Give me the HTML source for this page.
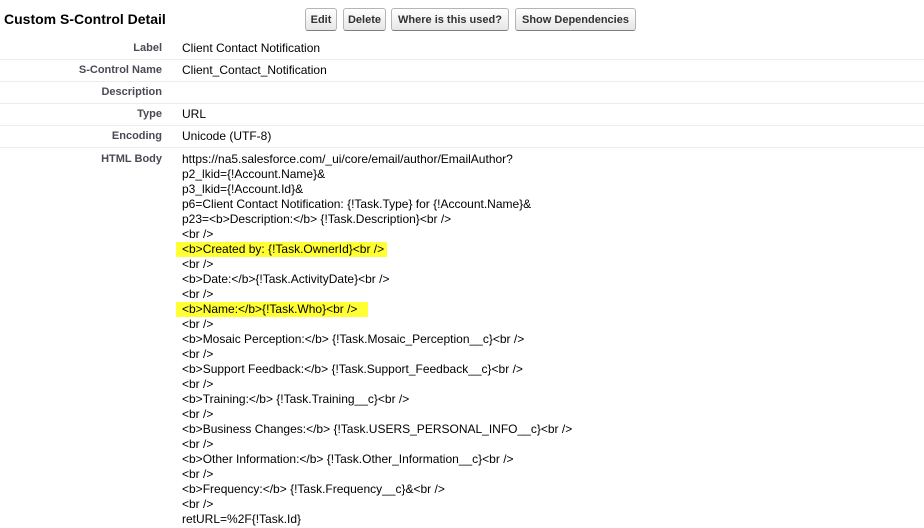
<!DOCTYPE html>
<html><head><style>
body{margin:0;width:924px;height:528px;background:#fff;font-family:"Liberation Sans",Arial,sans-serif;color:#000;overflow:hidden;position:relative}
.t{position:absolute;left:4px;top:11px;font-weight:bold;font-size:14px;color:#000}
.btn{position:absolute;top:8px;height:23px;border:1px solid #b5b5b5;border-bottom-color:#7f7f7f;border-radius:3px;background:linear-gradient(#fff,#f0f0f0 60%,#e6e6e6);font-weight:bold;font-size:11px;color:#333;line-height:23px;text-align:center;box-sizing:border-box}
.row{position:absolute;left:0;width:924px;height:22px;border-bottom:1px solid #ececec}
.l{position:absolute;right:762px;top:5px;font-weight:bold;font-size:11px;color:#4a4a56;text-align:right;white-space:nowrap}
.v{position:absolute;left:182px;top:4px;font-size:12px;color:#000;white-space:nowrap}
.body{position:absolute;left:182px;top:152px;font-size:12px;line-height:15px;color:#000;white-space:pre}
.hl{position:absolute;background:#ffff33}
</style></head><body>
<div class="t">Custom S-Control Detail</div>
<div class="btn" style="left:305px;width:32px">Edit</div>
<div class="btn" style="left:343px;width:43px">Delete</div>
<div class="btn" style="left:391px;width:118px">Where is this used?</div>
<div class="btn" style="left:515px;width:121px">Show Dependencies</div>
<div class="row" style="top:37px"><span class="l">Label</span><span class="v">Client Contact Notification</span></div>
<div class="row" style="top:59px"><span class="l">S-Control Name</span><span class="v">Client_Contact_Notification</span></div>
<div class="row" style="top:81px"><span class="l">Description</span></div>
<div class="row" style="top:103px"><span class="l">Type</span><span class="v">URL</span></div>
<div class="row" style="top:125px"><span class="l">Encoding</span><span class="v">Unicode (UTF-8)</span></div>
<div style="position:absolute;top:147px;left:0;width:924px;height:1px;background:#ececec"></div>
<div class="l" style="top:153px">HTML Body</div>
<div class="hl" style="left:176px;top:242px;width:211px;height:15px"></div>
<div class="hl" style="left:176px;top:302px;width:192px;height:15px"></div>
<div class="body">https://na5.salesforce.com/_ui/core/email/author/EmailAuthor?
p2_lkid={!Account.Name}&amp;
p3_lkid={!Account.Id}&amp;
p6=Client Contact Notification: {!Task.Type} for {!Account.Name}&amp;
p23=&lt;b&gt;Description:&lt;/b&gt; {!Task.Description}&lt;br /&gt;
&lt;br /&gt;
&lt;b&gt;Created by: {!Task.OwnerId}&lt;br /&gt;
&lt;br /&gt;
&lt;b&gt;Date:&lt;/b&gt;{!Task.ActivityDate}&lt;br /&gt;
&lt;br /&gt;
&lt;b&gt;Name:&lt;/b&gt;{!Task.Who}&lt;br /&gt;
&lt;br /&gt;
&lt;b&gt;Mosaic Perception:&lt;/b&gt; {!Task.Mosaic_Perception__c}&lt;br /&gt;
&lt;br /&gt;
&lt;b&gt;Support Feedback:&lt;/b&gt; {!Task.Support_Feedback__c}&lt;br /&gt;
&lt;br /&gt;
&lt;b&gt;Training:&lt;/b&gt; {!Task.Training__c}&lt;br /&gt;
&lt;br /&gt;
&lt;b&gt;Business Changes:&lt;/b&gt; {!Task.USERS_PERSONAL_INFO__c}&lt;br /&gt;
&lt;br /&gt;
&lt;b&gt;Other Information:&lt;/b&gt; {!Task.Other_Information__c}&lt;br /&gt;
&lt;br /&gt;
&lt;b&gt;Frequency:&lt;/b&gt; {!Task.Frequency__c}&amp;&lt;br /&gt;
&lt;br /&gt;
retURL=%2F{!Task.Id}</div>
</body></html>
